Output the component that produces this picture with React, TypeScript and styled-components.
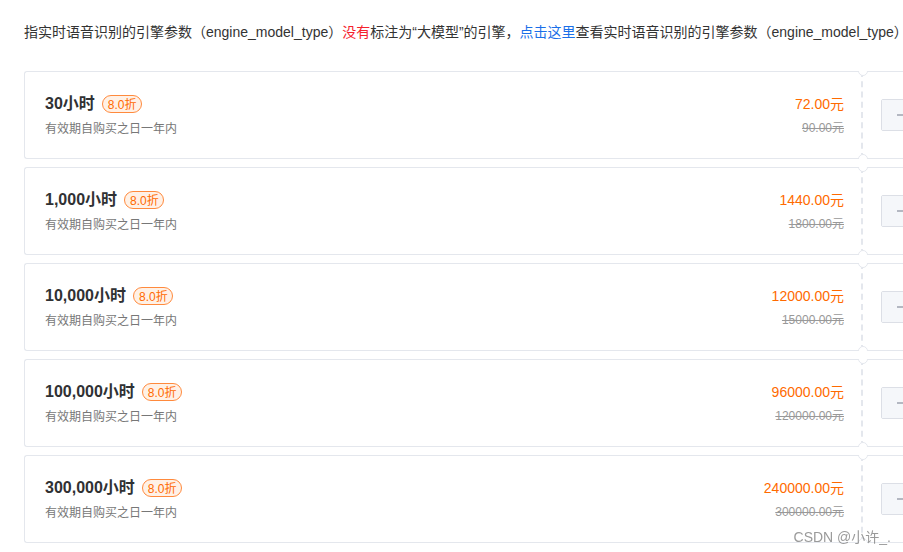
import React from "react";
import styled, { createGlobalStyle } from "styled-components";

const GlobalStyle = createGlobalStyle`
  html, body {
    margin: 0;
    padding: 0;
    overflow: hidden;
    background: #fff;
  }
  body {
    font-family: "Liberation Sans", "Noto Sans CJK SC", sans-serif;
    color: #333;
  }
`;

type Plan = {
  hours: string;
  discount: string;
  price: string;
  original: string;
};

const plans: Plan[] = [
  { hours: "30小时", discount: "8.0折", price: "72.00元", original: "90.00元" },
  { hours: "1,000小时", discount: "8.0折", price: "1440.00元", original: "1800.00元" },
  { hours: "10,000小时", discount: "8.0折", price: "12000.00元", original: "15000.00元" },
  { hours: "100,000小时", discount: "8.0折", price: "96000.00元", original: "120000.00元" },
  { hours: "300,000小时", discount: "8.0折", price: "240000.00元", original: "300000.00元" },
];

function App() {
  return (
    <>
      <GlobalStyle />
      <StyledPage>
        <StyledNotice>
          指实时语音识别的引擎参数（engine_model_type）
          <StyledRed>没有</StyledRed>
          标注为“大模型”的引擎，
          <StyledLink>点击这里</StyledLink>
          查看实时语音识别的引擎参数（engine_model_type）
        </StyledNotice>
        <StyledList>
          {plans.map((p) => (
            <StyledCard key={p.hours}>
              <StyledInfo>
                <StyledLeft>
                  <StyledTitleRow>
                    <StyledTitle>{p.hours}</StyledTitle>
                    <StyledBadge>{p.discount}</StyledBadge>
                  </StyledTitleRow>
                  <StyledDesc>有效期自购买之日一年内</StyledDesc>
                </StyledLeft>
                <StyledPrices>
                  <StyledPrice>{p.price}</StyledPrice>
                  <StyledOriginal>{p.original}</StyledOriginal>
                </StyledPrices>
              </StyledInfo>
              <StyledAction>
                <StyledStepper>
                  <StyledStepBtn>
                    <StyledMinus />
                  </StyledStepBtn>
                  <StyledStepValue />
                  <StyledStepBtn>
                    <StyledPlus />
                  </StyledStepBtn>
                </StyledStepper>
              </StyledAction>
            </StyledCard>
          ))}
        </StyledList>
      </StyledPage>
      <StyledWatermark>CSDN @小许_.</StyledWatermark>
    </>
  );
}

export default App;

const StyledPage = styled.div`
  padding: 22px 0 0 24px;
  width: 1100px;
`;

const StyledNotice = styled.p`
  margin: 0;
  font-size: 14px;
  line-height: 20px;
  color: #333;
  white-space: nowrap;
`;

const StyledRed = styled.span`
  color: #f5222d;
`;

const StyledLink = styled.span`
  color: #1a6fe8;
  cursor: pointer;
`;

const StyledList = styled.div`
  display: flex;
  flex-direction: column;
  gap: 8px;
  margin-top: 29px;
`;

const StyledCard = styled.div`
  display: flex;
  width: 1017px;
  height: 88px;
  box-sizing: border-box;
`;

const StyledInfo = styled.div`
  flex: 1;
  display: flex;
  justify-content: space-between;
  align-items: center;
  padding: 0 17px 0 20px;
  border: 1px solid #e4e7ed;
  border-right: none;
  border-radius: 3px 0 0 3px;
`;

const StyledLeft = styled.div`
  display: flex;
  flex-direction: column;
  gap: 5px;
`;

const StyledTitleRow = styled.div`
  display: flex;
  align-items: center;
  gap: 7px;
`;

const StyledTitle = styled.span`
  font-size: 16px;
  font-weight: 700;
  line-height: 22px;
  color: #303133;
`;

const StyledBadge = styled.span`
  display: inline-flex;
  align-items: center;
  height: 18px;
  padding: 0 4px 0 5px;
  box-sizing: border-box;
  font-size: 12px;
  color: #ff6a00;
  background: #fff1e6;
  border: 1px solid #ff8a3d;
  border-radius: 9px;
`;

const StyledDesc = styled.span`
  font-size: 12px;
  line-height: 18px;
  color: #777;
`;

const StyledPrices = styled.div`
  display: flex;
  flex-direction: column;
  align-items: flex-end;
  gap: 6px;
`;

const StyledPrice = styled.span`
  font-size: 14px;
  line-height: 20px;
  color: #ff6a00;
`;

const StyledOriginal = styled.span`
  font-size: 12px;
  line-height: 16px;
  color: #999;
  text-decoration: line-through;
`;

const StyledAction = styled.div`
  position: relative;
  width: 180px;
  display: flex;
  align-items: center;
  padding-left: 18px;
  box-sizing: border-box;
  border: 1px solid #e4e7ed;
  border-left: 2px dashed #e4e7ed;
  border-radius: 0 3px 3px 0;

  &::before,
  &::after {
    content: "";
    position: absolute;
    left: -5px;
    width: 8px;
    height: 8px;
    background: #fff;
    border: 1px solid #e4e7ed;
    border-radius: 50%;
  }
  &::before {
    top: -6px;
    clip-path: inset(50% 0 0 0);
  }
  &::after {
    bottom: -6px;
    clip-path: inset(0 0 50% 0);
  }
`;

const StyledStepper = styled.div`
  display: flex;
  height: 32px;
  border: 1px solid #dcdfe6;
  border-radius: 2px;
  box-sizing: border-box;
`;

const StyledStepBtn = styled.div`
  position: relative;
  width: 38px;
  display: flex;
  align-items: center;
  justify-content: center;
  background: #f5f7fa;
`;

const StyledMinus = styled.span`
  display: block;
  width: 12px;
  height: 2px;
  margin-left: 4px;
  background: #b4b8c2;
`;

const StyledPlus = styled(StyledMinus)`
  position: relative;
  margin-left: 0;
  &::after {
    content: "";
    position: absolute;
    left: 5px;
    top: -5px;
    width: 2px;
    height: 12px;
    background: #b4b8c2;
  }
`;

const StyledStepValue = styled.div`
  width: 60px;
  border-left: 1px solid #dcdfe6;
  border-right: 1px solid #dcdfe6;
`;

const StyledWatermark = styled.div`
  position: fixed;
  right: 12px;
  bottom: 6px;
  font-size: 14px;
  color: rgba(120, 120, 120, 0.75);
  font-family: "Liberation Sans", "Noto Sans CJK SC", sans-serif;
`;
